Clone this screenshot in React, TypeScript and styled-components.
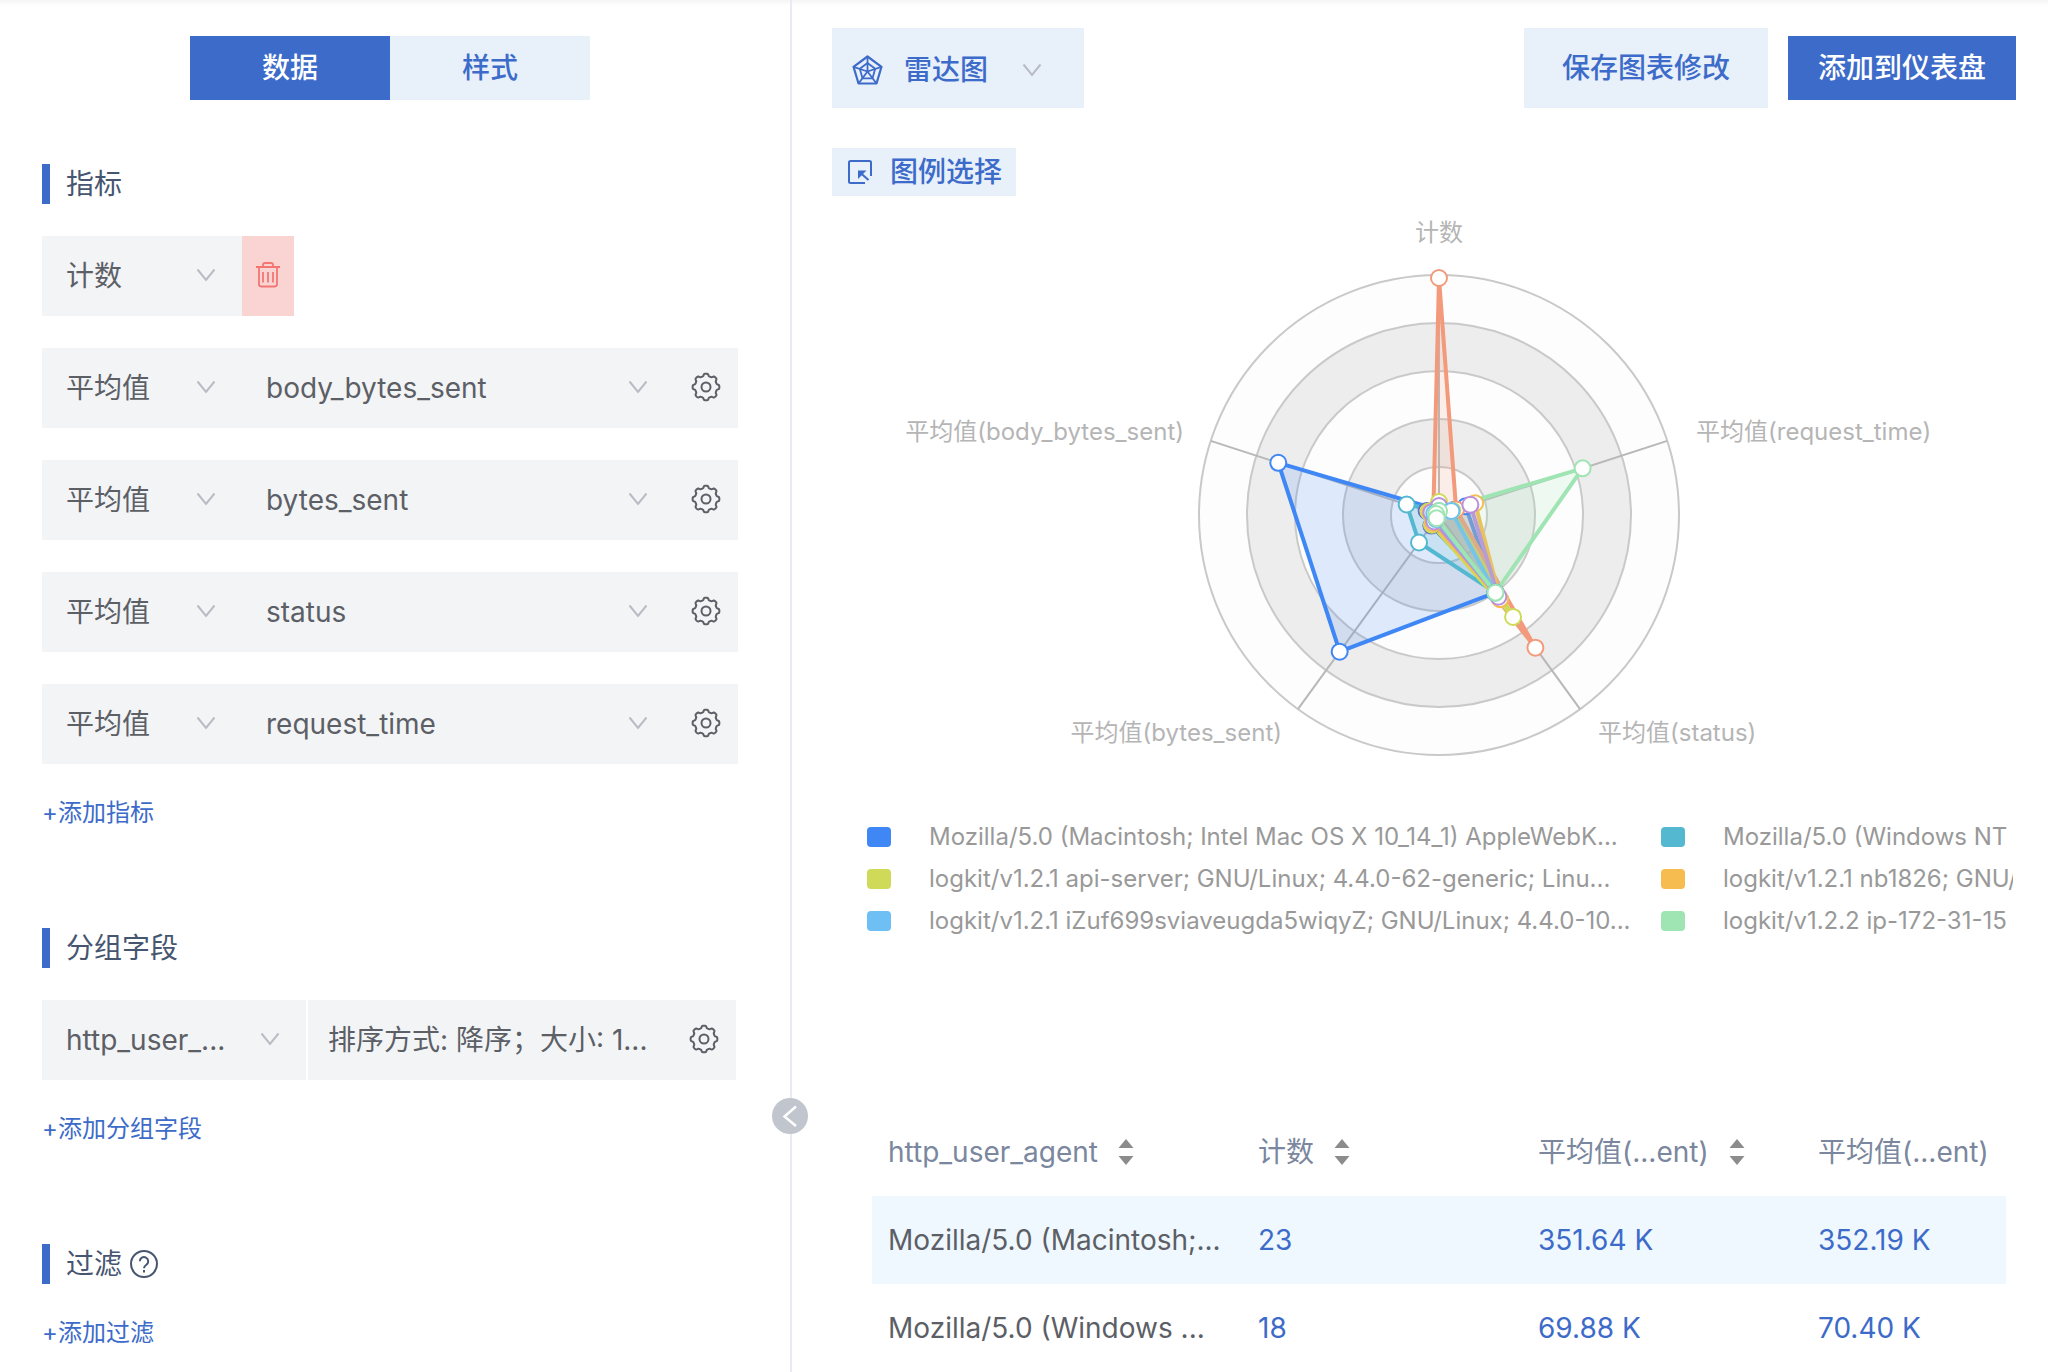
import React, { useState } from 'react';
import styled, { createGlobalStyle, css } from 'styled-components';

const color = {
  primary: '#3d6bc9',
  primaryLight: '#e8f0fa',
  field: '#f3f4f6',
  text: '#5c5f66',
  heading: '#465570',
  header: '#7a879e',
  line: '#eaebf0',
};

const GlobalStyle = createGlobalStyle`
  *, *::before, *::after { box-sizing: border-box; }
  body {
    margin: 0;
    background: #fff;
    color: ${color.text};
    font: 28px/40px Inter, "Noto Sans CJK SC", sans-serif;
  }
  button, select { font: inherit; color: inherit; border: 0; margin: 0; padding: 0; cursor: pointer; }
  a { text-decoration: none; }
  svg { display: block; flex: none; }
`;

const Page = styled.div`
  display: flex;
  min-height: 100vh;
  background: linear-gradient(#f5f5f5, #fff 6px);
`;

/* ---------- left: configuration ---------- */

const Sidebar = styled.aside`
  position: relative;
  flex: 0 0 792px;
  padding: 36px 52px 0 42px;
  border-right: 2px solid ${color.line};
`;

const Tabs = styled.div`
  display: flex;
  justify-content: center;
`;

const Tab = styled.button<{ $active?: boolean }>`
  width: 200px;
  height: 64px;
  font-weight: 500;
  background: ${(p) => (p.$active ? color.primary : color.primaryLight)};
  color: ${(p) => (p.$active ? '#fff' : color.primary)};
`;

const Section = styled.section<{ $first?: boolean }>`
  display: flex;
  flex-direction: column;
  align-items: stretch;
  gap: 32px;
  margin-top: ${(p) => (p.$first ? 64 : 98)}px;
`;

const Heading = styled.h2`
  display: flex;
  align-items: center;
  gap: 8px;
  height: 40px;
  margin: 0;
  padding-left: 16px;
  border-left: 8px solid ${color.primary};
  color: ${color.heading};
  font-size: 28px;
  font-weight: 400;
`;

const Row = styled.div<{ $gap?: number }>`
  display: flex;
  gap: ${(p) => p.$gap ?? 0}px;
  height: 80px;
`;

const SelectBox = styled.label<{ $width?: number }>`
  display: grid;
  align-items: center;
  flex: ${(p) => (p.$width ? `0 0 ${p.$width}px` : '1 1 0')};
  min-width: 0;
  background: ${color.field};
  > * { grid-area: 1 / 1; }
  > svg { pointer-events: none; justify-self: end; margin-right: 26px; margin-bottom: 2px; }
`;

const selectReset = css`
  appearance: none;
  width: 100%;
  height: 100%;
  background: transparent;
  border-radius: 0;
`;

const Select = styled.select`
  ${selectReset}
  padding: 0 56px 0 24px;
`;

const IconButton = styled.button`
  display: flex;
  align-items: center;
  justify-content: center;
  flex: 0 0 64px;
  padding-bottom: 2px;
  background: ${color.field};
`;

const DeleteButton = styled(IconButton)`
  flex-basis: 52px;
  background: #fad4d3;
`;

const GroupRow = styled(Row)`
  margin-right: 2px;
`;

const SortField = styled.button`
  flex: 1 1 0;
  min-width: 0;
  padding-left: 20px;
  background: ${color.field};
  text-align: left;
  white-space: nowrap;
  overflow: hidden;
`;

const GroupControls = styled.div`
  display: flex;
  flex: 1 1 0;
  min-width: 0;
`;

const AddLink = styled.a`
  align-self: flex-start;
  color: ${color.primary};
  font-size: 24px;
  line-height: 34px;
`;

const CollapseButton = styled.button`
  position: absolute;
  top: 1098px;
  right: -18px;
  display: flex;
  align-items: center;
  justify-content: center;
  width: 36px;
  height: 36px;
  border-radius: 50%;
  background: #c1c5ce;
`;

/* ---------- right: chart and table ---------- */

const Main = styled.main`
  flex: 1 1 0;
  min-width: 0;
  padding: 28px 32px 0 40px;
`;

const Toolbar = styled.div`
  display: flex;
  align-items: center;
  justify-content: space-between;
`;

const Actions = styled.div`
  display: flex;
  align-items: center;
  gap: 20px;
`;

const ChartTypeBox = styled.label`
  display: grid;
  align-items: center;
  width: 252px;
  height: 80px;
  padding-top: 4px;
  background: ${color.primaryLight};
  > * { grid-area: 1 / 1; }
  > svg { pointer-events: none; }
  > svg:first-of-type { margin-left: 20px; }
  > svg:last-of-type { justify-self: end; margin-right: 42px; }
`;

const ChartTypeSelect = styled.select`
  ${selectReset}
  padding-left: 72px;
  color: ${color.primary};
  font-weight: 500;
`;

const SaveButton = styled.button`
  height: 80px;
  padding: 0 38px;
  background: ${color.primaryLight};
  color: ${color.primary};
  font-weight: 500;
`;

const PrimaryButton = styled.button`
  height: 64px;
  padding: 0 30px;
  background: ${color.primary};
  color: #fff;
  font-weight: 500;
`;

const LegendButton = styled.button`
  display: flex;
  align-items: center;
  gap: 18px;
  height: 48px;
  margin-top: 40px;
  padding: 0 14px 0 16px;
  background: ${color.primaryLight};
  color: ${color.primary};
  font-weight: 500;
`;

const ChartSvg = styled.svg`
  width: 100%;
  height: auto;
  font-size: 24px;
  fill: none;
`;

const Legend = styled.ul`
  display: grid;
  grid-template-columns: repeat(2, 794px);
  grid-auto-rows: 42px;
  align-items: center;
  margin: 20px 3px 0 35px;
  padding: 0;
  overflow: hidden;
  list-style: none;
  color: #999;
  font-size: 24px;
`;

const LegendItem = styled.li<{ $color: string }>`
  display: flex;
  align-items: center;
  gap: 38px;
  white-space: nowrap;
  &::before {
    content: '';
    width: 24px;
    height: 20px;
    border-radius: 4px;
    background: ${(p) => p.$color};
  }
`;

const TableWrap = styled.div`
  margin: 166px 10px 0 40px;
  overflow: hidden;
`;

const Table = styled.table`
  width: 1210px;
  table-layout: fixed;
  border-collapse: collapse;
  text-align: left;
  white-space: nowrap;
  tbody tr:nth-child(odd) { background: #f0f8ff; }
`;

const Th = styled.th<{ $width: number }>`
  width: ${(p) => p.$width}px;
  height: 88px;
  padding: 0 16px;
  color: ${color.header};
  font-weight: 400;
`;

const SortButton = styled.button`
  display: flex;
  align-items: center;
  gap: 20px;
  background: none;
`;

const Td = styled.td<{ $value?: boolean }>`
  height: 88px;
  padding: 0 16px;
  color: ${(p) => (p.$value ? color.primary : color.text)};
`;

/* ---------- icons ---------- */

const Chevron = () => (
  <svg width="20" height="14" viewBox="0 0 20 14" fill="none" stroke="#b9bcc3" strokeWidth="2">
    <path d="M1.500 1.500 10 12l8.500-10.500" />
  </svg>
);

const gearPath = (() => {
  const steps = 160;
  let d = '';
  for (let i = 0; i < steps; i += 1) {
    const a = (i / steps) * Math.PI * 2;
    const wave = Math.tanh(2.2 * Math.cos(8 * a));
    const r = 12.2 + 1.2 * wave;
    d += `${i ? 'L' : 'M'}${(15 + r * Math.sin(a)).toFixed(2)} ${(15 - r * Math.cos(a)).toFixed(2)}`;
  }
  return `${d}Z`;
})();

const Gear = () => (
  <svg width="30" height="30" viewBox="0 0 30 30" fill="none" stroke={color.text} strokeWidth="2" strokeLinejoin="round">
    <path d={gearPath} />
    <circle cx="15" cy="15" r="4.5" />
  </svg>
);

const Trash = () => (
  <svg width="24" height="26" viewBox="0 0 24 26" fill="none" stroke="#f37673" strokeWidth="1.8">
    <path d="M0 5h24M7 5V3q0-2 2-2h6q2 0 2 2v2M3 5v17q0 2.500 2.500 2.500h13q2.500 0 2.500-2.500V5M7 10v10.500M12 10v10.500M17 10v10.500" />
  </svg>
);

const Help = () => (
  <svg width="28" height="28" viewBox="0 0 28 28" fill="none" stroke={color.heading} strokeWidth="2">
    <circle cx="14" cy="14" r="13" />
    <path d="M9.800 11.200a4.200 4.200 0 1 1 6.600 3.500c-1.500 1-2.400 1.700-2.400 3.600M14 20v2.400" />
  </svg>
);

const RadarIcon = () => (
  <svg width="31" height="30" viewBox="0 0 31 30" fill="none" stroke={color.primary} strokeWidth="2" strokeLinejoin="round">
    <path strokeWidth="2.2" d="M15.500 1.500 29.500 11.800 24.500 28.500h-18L1.500 11.800Z" />
    <path strokeWidth="1.8" d="M15.500 8 23.200 13.800 20.500 23.300h-10L7.800 13.800Z" />
    <path strokeWidth="1.8" d="M15.500 1.500v15M29.500 11.800l-14 4.700M1.500 11.800l14 4.700M24.500 28.500l-9-12-9 12" />
  </svg>
);

const PickIcon = () => (
  <svg width="24" height="24" viewBox="0 0 24 24" fill="none" stroke={color.primary} strokeWidth="2">
    <path d="M17 23H2.500Q1 23 1 21.500v-19Q1 1 2.500 1h19Q23 1 23 2.500V16" />
    <path d="M12 12.500 20.500 20" />
    <path d="M10 10.500h8.500L10 19Z" fill={color.primary} stroke="none" />
  </svg>
);

const SortIcon = () => (
  <svg width="16" height="26" viewBox="0 0 16 26" fill="#8c8c8c">
    <path d="M8 0l7.500 9H.5ZM8 26l7.500-9H.5Z" />
  </svg>
);

const Back = () => (
  <svg width="16" height="22" viewBox="0 0 16 22" fill="none" stroke="#fff" strokeWidth="2.5">
    <path d="M14 1.500 2.500 11.500 14 21" />
  </svg>
);

/* ---------- radar chart ---------- */

const center = { x: 607, y: 319 };
const axes = [-90, -18, 54, 126, 198].map((deg) => (deg * Math.PI) / 180);

/* radii per axis: count, request_time, status, bytes_sent, body_bytes_sent */
const series = [
  { color: '#3f87f5', radii: [5, 28, 96, 169, 169] },
  { color: '#54b8d1', radii: [5, 16, 96, 34, 34] },
  { color: '#5d73c4', radii: [4, 16, 96, 13, 13] },
  { color: '#f29a7b', radii: [237, 18, 164, 6, 6] },
  { color: '#cfdb58', radii: [13, 14, 126, 12, 11] },
  { color: '#f6bc50', radii: [5, 38, 104, 10, 9] },
  { color: '#ba8fdb', radii: [9, 33, 101, 8, 8] },
  { color: '#6ebff3', radii: [4, 13, 96, 5, 5] },
  { color: '#9fe4b3', radii: [4, 151, 96, 4, 3] },
];

const point = (r: number, i: number) => ({
  x: center.x + r * Math.cos(axes[i]),
  y: center.y + r * Math.sin(axes[i]),
});

const polygon = (radii: number[]) =>
  radii.map((r, i) => { const p = point(r, i); return `${p.x.toFixed(1)},${p.y.toFixed(1)}`; }).join(' ');

const markerOrder = [0, 1, 2, 4, 3];

const rings = [
  { r: 240, fill: '#fdfdfd' },
  { r: 192, fill: '#ededed' },
  { r: 144, fill: '#fdfdfd' },
  { r: 96, fill: '#ededed' },
  { r: 48, fill: '#fdfdfd' },
];

const axisLabels: { text: string; x: number; y: number; anchor: 'start' | 'middle' | 'end' }[] = [
  { text: '计数', x: 607, y: 45, anchor: 'middle' },
  { text: '平均值(request_time)', x: 864, y: 244, anchor: 'start' },
  { text: '平均值(status)', x: 766, y: 545, anchor: 'start' },
  { text: '平均值(bytes_sent)', x: 450, y: 545, anchor: 'end' },
  { text: '平均值(body_bytes_sent)', x: 352, y: 244, anchor: 'end' },
];

const RadarChart = () => (
  <ChartSvg viewBox="0 0 1184 600" role="img" aria-label="雷达图">
    {rings.map((ring) => (
      <circle key={ring.r} cx={center.x} cy={center.y} r={ring.r} fill={ring.fill} stroke="#c9c9c9" strokeWidth="2" />
    ))}
    {axes.map((a, i) => {
      const end = point(240, i);
      return <line key={a} x1={center.x} y1={center.y} x2={end.x} y2={end.y} stroke="#b8b8b8" strokeWidth="2" />;
    })}
    {series.map((s) => (
      <g key={s.color}>
        <polygon points={polygon(s.radii)} fill={s.color} fillOpacity="0.16" />
        <polygon points={polygon(s.radii)} stroke={s.color} strokeWidth="4" strokeLinejoin="round" />
      </g>
    ))}
    {series.map((s) => (
      <g key={s.color} fill="#fff" stroke={s.color} strokeWidth="2">
        {markerOrder.map((i) => {
          const p = point(s.radii[i], i);
          return <circle key={axes[i]} cx={p.x} cy={p.y} r="8" />;
        })}
      </g>
    ))}
    {axisLabels.map((l) => (
      <text key={l.text} x={l.x} y={l.y} textAnchor={l.anchor} fill="#b5b5b5">{l.text}</text>
    ))}
  </ChartSvg>
);

/* ---------- page ---------- */

const metrics = ['body_bytes_sent', 'bytes_sent', 'status', 'request_time'];

const legend = [
  { color: '#3f87f5', text: 'Mozilla/5.0 (Macintosh; Intel Mac OS X 10_14_1) AppleWebK...' },
  { color: '#54b8d1', text: 'Mozilla/5.0 (Windows NT' },
  { color: '#cfdb58', text: 'logkit/v1.2.1 api-server; GNU/Linux; 4.4.0-62-generic; Linu...' },
  { color: '#f6bc50', text: 'logkit/v1.2.1 nb1826; GNU/' },
  { color: '#6ebff3', text: 'logkit/v1.2.1 iZuf699sviaveugda5wiqyZ; GNU/Linux; 4.4.0-10...' },
  { color: '#9fe4b3', text: 'logkit/v1.2.2 ip-172-31-15' },
];

const columns = [
  { id: 'agent', title: 'http_user_agent', width: 370 },
  { id: 'count', title: '计数', width: 280 },
  { id: 'body', title: '平均值(...ent)', width: 280 },
  { id: 'bytes', title: '平均值(...ent)', width: 280 },
];

const rows = [
  ['Mozilla/5.0 (Macintosh;...', '23', '351.64 K', '352.19 K'],
  ['Mozilla/5.0 (Windows ...', '18', '69.88 K', '70.40 K'],
];

const Picker = ({ value, label, width }: { value: string; label: string; width?: number }) => (
  <SelectBox $width={width}>
    <Select aria-label={label} defaultValue={value}>
      <option>{value}</option>
    </Select>
    <Chevron />
  </SelectBox>
);

export default function App() {
  const [tab, setTab] = useState('数据');
  return (
    <>
      <GlobalStyle />
      <Page>
        <Sidebar>
          <Tabs>
            {['数据', '样式'].map((name) => (
              <Tab key={name} type="button" $active={tab === name} onClick={() => setTab(name)}>{name}</Tab>
            ))}
          </Tabs>

          <Section $first>
            <Heading>指标</Heading>
            <Row>
              <Picker value="计数" label="聚合方式" width={200} />
              <DeleteButton type="button" aria-label="删除"><Trash /></DeleteButton>
            </Row>
            {metrics.map((m) => (
              <Row key={m}>
                <Picker value="平均值" label="聚合方式" width={200} />
                <Picker value={m} label="字段" />
                <IconButton type="button" aria-label="设置"><Gear /></IconButton>
              </Row>
            ))}
            <AddLink href="#metric">+添加指标</AddLink>
          </Section>

          <Section>
            <Heading>分组字段</Heading>
            <GroupRow $gap={2}>
              <Picker value="http_user_..." label="分组字段" width={264} />
              <GroupControls>
                <SortField type="button">排序方式: 降序；大小: 1...</SortField>
                <IconButton type="button" aria-label="设置"><Gear /></IconButton>
              </GroupControls>
            </GroupRow>
            <AddLink href="#group">+添加分组字段</AddLink>
          </Section>

          <Section>
            <Heading>过滤<Help /></Heading>
            <AddLink href="#filter">+添加过滤</AddLink>
          </Section>

          <CollapseButton type="button" aria-label="收起"><Back /></CollapseButton>
        </Sidebar>

        <Main>
          <Toolbar>
            <ChartTypeBox>
              <ChartTypeSelect aria-label="图表类型" defaultValue="雷达图">
                <option>雷达图</option>
              </ChartTypeSelect>
              <RadarIcon />
              <Chevron />
            </ChartTypeBox>
            <Actions>
              <SaveButton type="button">保存图表修改</SaveButton>
              <PrimaryButton type="button">添加到仪表盘</PrimaryButton>
            </Actions>
          </Toolbar>

          <LegendButton type="button"><PickIcon />图例选择</LegendButton>

          <RadarChart />

          <Legend>
            {legend.map((item) => (
              <LegendItem key={item.color} $color={item.color}>{item.text}</LegendItem>
            ))}
          </Legend>

          <TableWrap>
            <Table>
              <thead>
                <tr>
                  {columns.map((c) => (
                    <Th key={c.id} $width={c.width} scope="col">
                      <SortButton type="button">{c.title}<SortIcon /></SortButton>
                    </Th>
                  ))}
                </tr>
              </thead>
              <tbody>
                {rows.map((cells) => (
                  <tr key={cells[0]}>
                    {cells.map((cell, i) => (
                      <Td key={columns[i].id} $value={i > 0}>{cell}</Td>
                    ))}
                  </tr>
                ))}
              </tbody>
            </Table>
          </TableWrap>
        </Main>
      </Page>
    </>
  );
}
